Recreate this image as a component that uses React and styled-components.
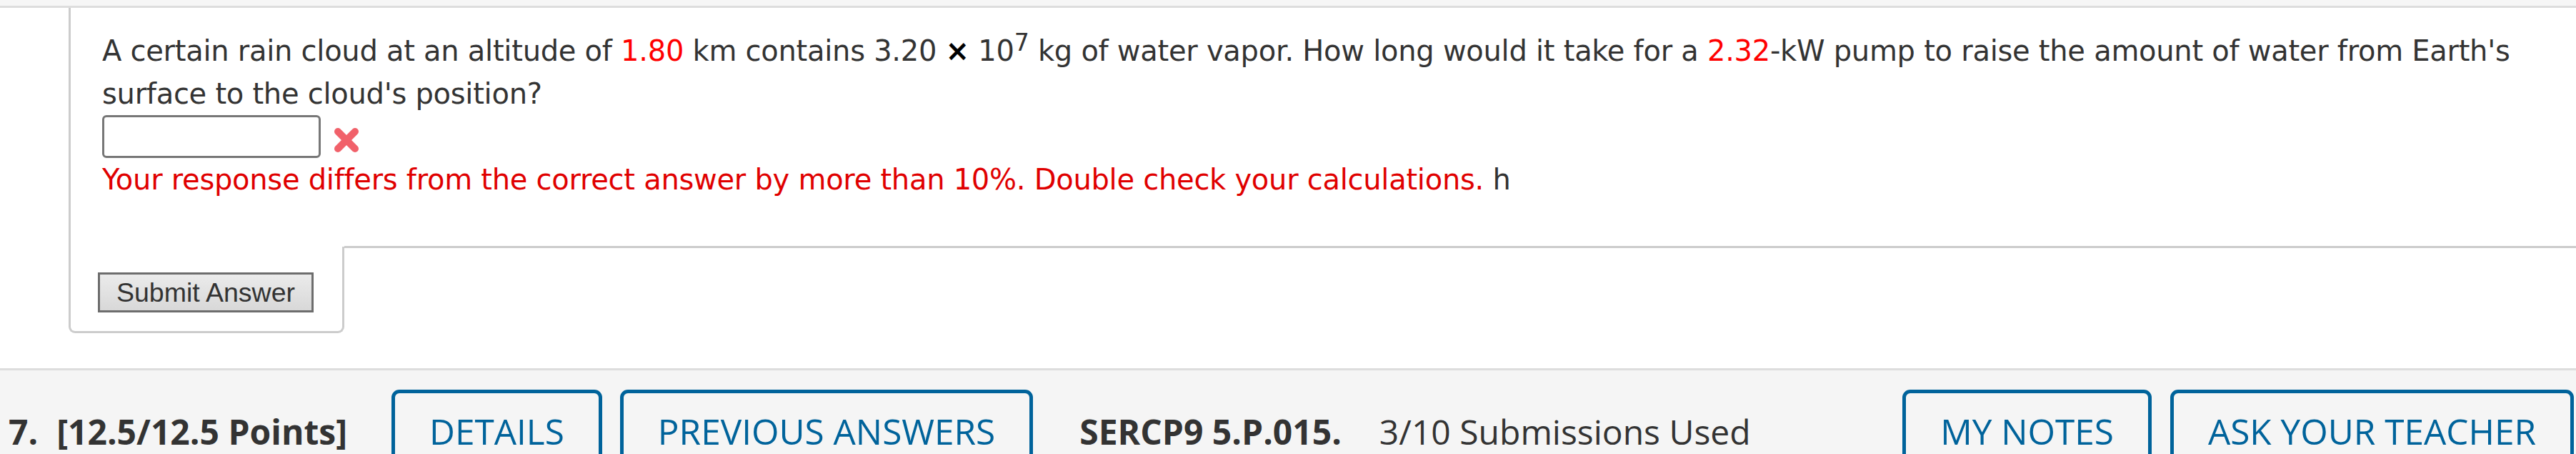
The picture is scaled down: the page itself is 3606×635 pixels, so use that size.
import React from 'react';
import styled, { createGlobalStyle } from 'styled-components';

const Global = createGlobalStyle`
  html, body { margin: 0; padding: 0; overflow: hidden; background: #fff; }
  * { box-sizing: border-box; }
`;

const Page = styled.div`
  width: 3606px;
  height: 635px;
  overflow: hidden;
  background: #fff;
`;

const TopStrip = styled.div`
  height: 11px;
  background: #f6f6f6;
  border-bottom: 3px solid #ddd;
`;

const Card = styled.div`
  margin-left: 96px;
  margin-bottom: 49px;
`;

const Content = styled.div`
  border-left: 3px solid #ccc;
  padding: 30px 50px 64px 44px;
  font-family: "DejaVu Sans", Verdana, sans-serif;
  font-size: 40px;
  line-height: 60px;
  letter-spacing: -0.27px;
  color: #333;
`;

const Question = styled.p`
  margin: 0;
`;

const Val = styled.span`
  color: #ff0000;
`;

const Times = styled.span`
  font-weight: bold;
  color: #000;
`;

const Sup = styled.sup`
  font-size: 0.83em;
  line-height: 0;
  vertical-align: super;
`;

const AnswerRow = styled.div`
  display: flex;
  align-items: flex-start;
  gap: 16px;
  height: 60px;
`;

const AnswerInput = styled.input`
  width: 306px;
  height: 60px;
  border: 3px solid #777;
  border-radius: 6px;
  background: #fff;
  padding: 0 8px;
  font: 40px "DejaVu Sans", sans-serif;
`;

const WrongMark = styled.svg`
  margin-top: 15px;
  filter: blur(0.5px);
`;

const ErrorLine = styled.div`
  color: #e00000;
`;

const Unit = styled.span`
  color: #333;
`;

const BottomRow = styled.div`
  display: flex;
  align-items: flex-start;
`;

const SubmitCell = styled.div`
  width: 386px;
  border: 3px solid #ccc;
  border-top: none;
  border-radius: 0 0 9px 9px;
  padding: 36px 0 26px 38px;
`;

const RightCell = styled.div`
  flex: 1;
  border-top: 3px solid #ccc;
  margin-top: -1px;
`;

const SubmitButton = styled.button`
  width: 302px;
  height: 56px;
  border: 3px solid #6d6d6d;
  border-radius: 0;
  background: linear-gradient(#ebebeb, #d8d8d8);
  font-family: "Liberation Sans", Arial, sans-serif;
  font-size: 37.5px;
  color: #333;
  padding: 0;
`;

const Bar = styled.div`
  border-top: 3px solid #ddd;
  background: #f5f5f5;
  display: flex;
  align-items: baseline;
  padding: 27px 3px 0 12px;
  height: 220px;
  font-family: "Open Sans", sans-serif;
  font-size: 48px;
  line-height: 72px;
  color: #333;
  white-space: nowrap;
`;

const Label = styled.span`
  font-weight: ${p => (p.$bold ? 700 : 400)};
  margin-right: ${p => p.$mr || 0}px;
`;

const TabButton = styled.button`
  font-family: "Open Sans", sans-serif;
  font-size: 49.5px;
  line-height: 75px;
  font-weight: 400;
  color: #00639b;
  background: transparent;
  border: 5px solid #00639b;
  border-radius: 11px;
  padding: 16px 48px 40px;
  margin-right: ${p => p.$mr || 0}px;
  margin-left: ${p => (p.$push ? 'auto' : '0')};
  white-space: nowrap;
`;

export default function App() {
  return (
    <Page>
      <Global />
      <TopStrip />
      <Card>
        <Content>
          <Question>
            A certain rain cloud at an altitude of <Val>1.80</Val> km contains 3.20 <Times>×</Times> 10<Sup>7</Sup> kg of water vapor. How long would it take for a <Val>2.32</Val>-kW pump to raise the amount of water from Earth's surface to the cloud's position?
          </Question>
          <AnswerRow>
            <AnswerInput type="text" aria-label="answer" />
            <WrongMark width="40" height="40" viewBox="0 0 40 40">
              <g stroke="#f1616a" strokeWidth="10" strokeLinecap="round">
                <line x1="8" y1="8" x2="32" y2="32" />
                <line x1="32" y1="8" x2="8" y2="32" />
              </g>
            </WrongMark>
          </AnswerRow>
          <ErrorLine>
            Your response differs from the correct answer by more than 10%. Double check your calculations. <Unit>h</Unit>
          </ErrorLine>
        </Content>
        <BottomRow>
          <SubmitCell>
            <SubmitButton>Submit Answer</SubmitButton>
          </SubmitCell>
          <RightCell />
        </BottomRow>
      </Card>
      <Bar>
        <Label $bold $mr={26}>7.</Label>
        <Label $bold $mr={62}>[12.5/12.5 Points]</Label>
        <TabButton $mr={25}>DETAILS</TabButton>
        <TabButton $mr={65}>PREVIOUS ANSWERS</TabButton>
        <Label $bold $mr={53}>SERCP9 5.P.015.</Label>
        <Label>3/10 Submissions Used</Label>
        <TabButton $push $mr={26}>MY NOTES</TabButton>
        <TabButton>ASK YOUR TEACHER</TabButton>
      </Bar>
    </Page>
  );
}
